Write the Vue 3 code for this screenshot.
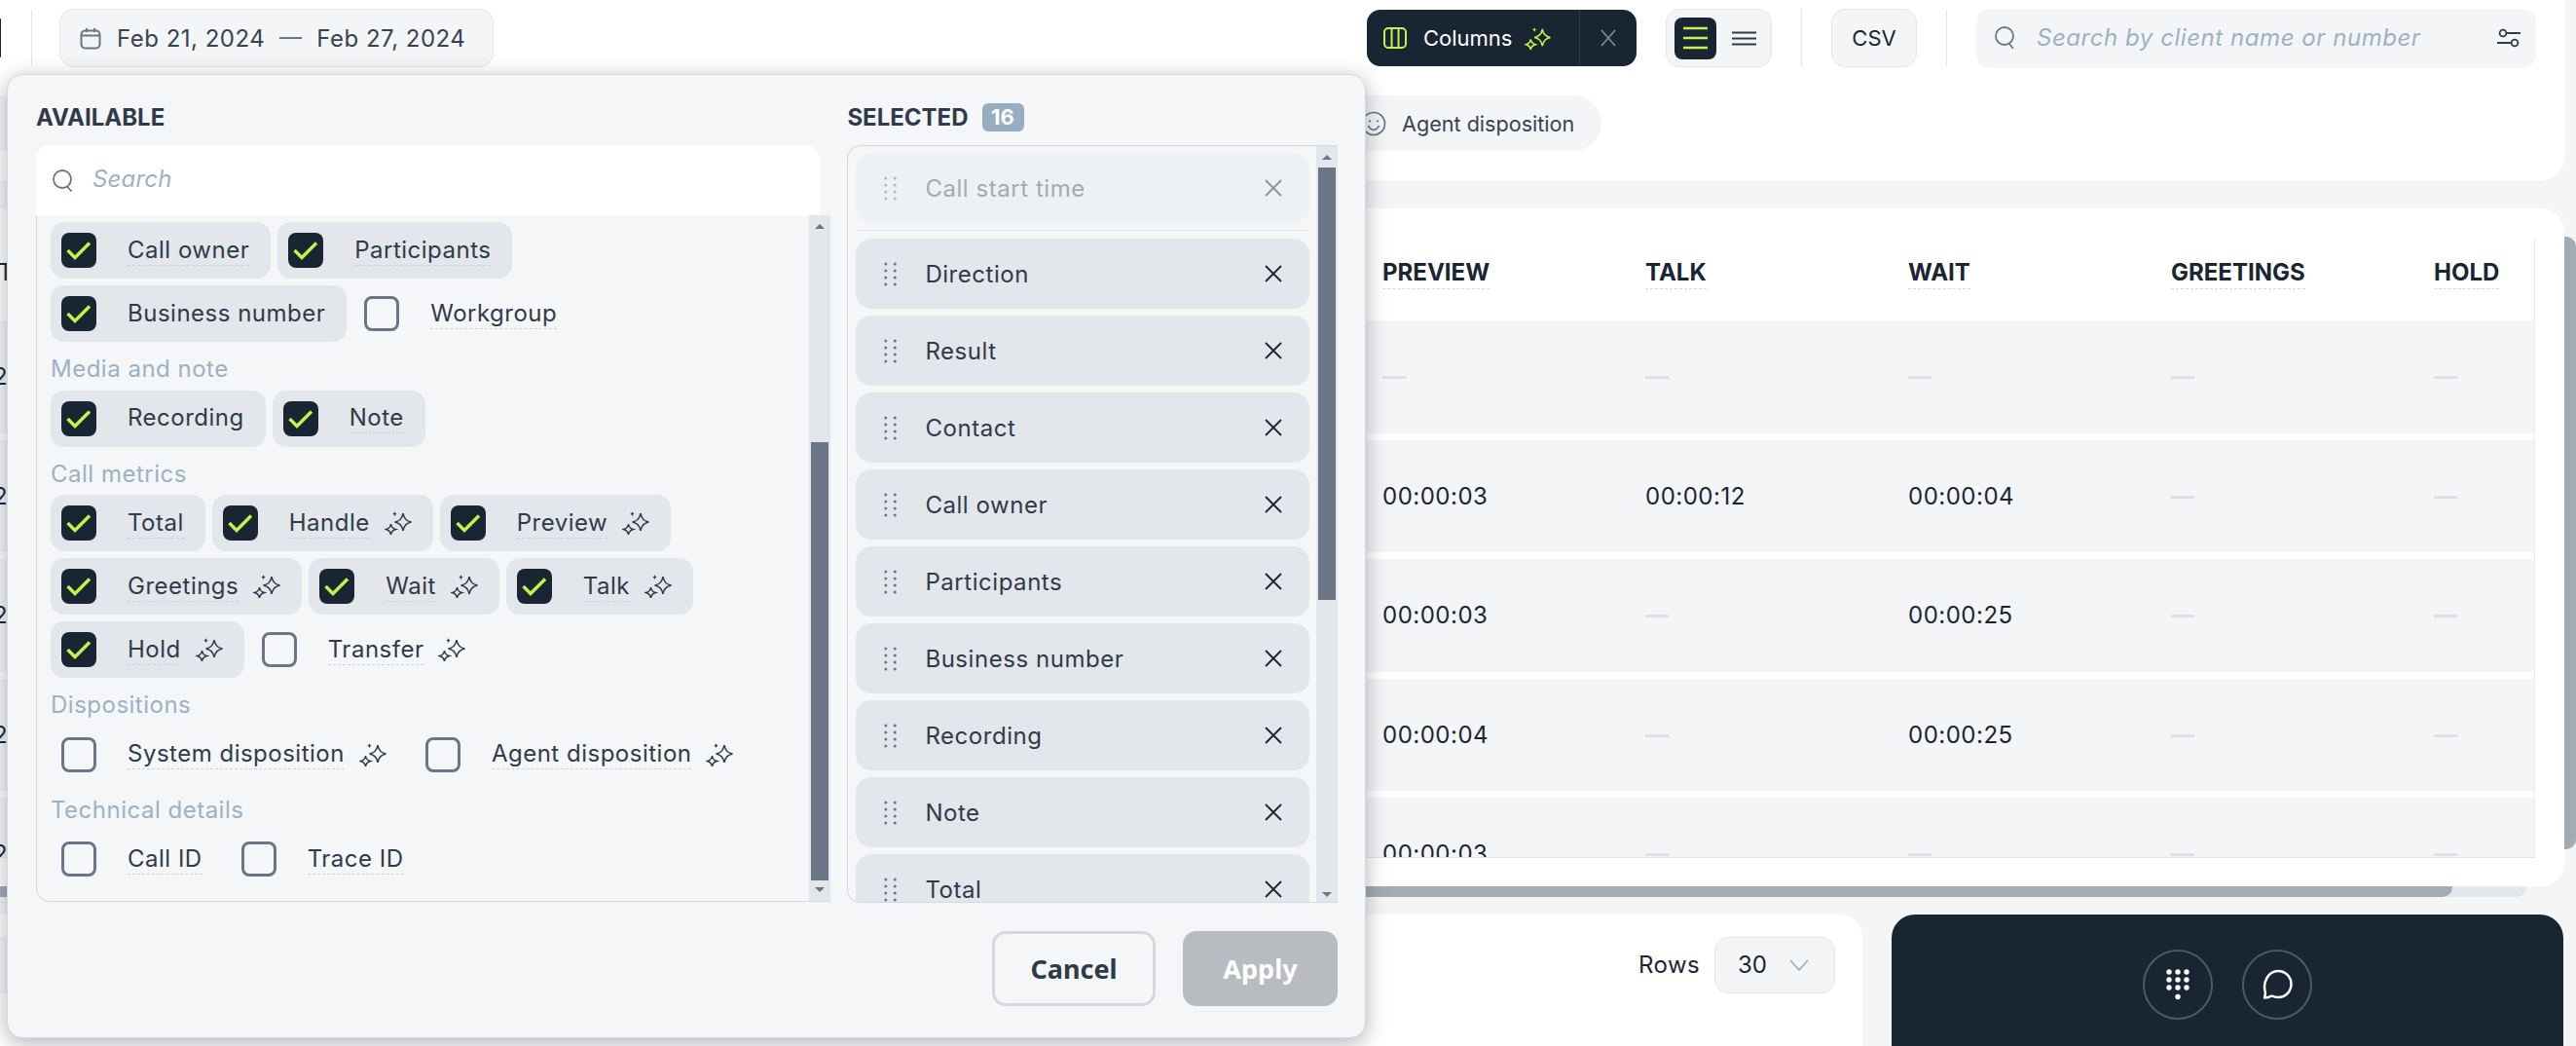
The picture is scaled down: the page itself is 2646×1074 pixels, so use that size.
<template>
  <div class="page">
    <section class="top-panel">
      <div class="toolbar">
        <span class="left-stub"></span>
        <span class="vline first"></span>
        <div class="date-box">
          <svg class="cal" width="22" height="23" viewBox="0 0 22 23" fill="none" stroke="#6b7585" stroke-width="2">
            <rect x="1.5" y="3.5" width="19" height="18" rx="4" />
            <path d="M1.5 8.5h19M7 1v4M15 1v4" />
          </svg>
          <span>Feb 21, 2024</span>
          <span class="date-dash"></span>
          <span>Feb 27, 2024</span>
        </div>
        <div class="tools">
          <div class="columns-btn">
            <div class="columns-main">
              <svg width="24" height="22" viewBox="0 0 24 22" fill="none" stroke="#c8f04a" stroke-width="2">
                <rect x="1" y="1" width="22" height="20" rx="4" />
                <path d="M8.5 1v20M15.5 1v20" />
              </svg>
              <span>Columns</span>
              <svg class="sparkle" width="27" height="25" viewBox="0 0 28 26" fill="none" stroke="#c8f04a" stroke-width="1.6">
                <path :d="sparkleBig" />
                <path :d="sparkleSmall" />
                <path :d="sparkleTiny" fill="#c8f04a" stroke="none" />
              </svg>
            </div>
            <div class="columns-close">
              <svg width="18" height="18" viewBox="0 0 18 18" stroke="#7f8896" stroke-width="1.8"><path d="M2 1l14 16M16 1L2 17" /></svg>
            </div>
          </div>
          <div class="view-toggle">
            <div class="view-on">
              <svg width="25" height="24" viewBox="0 0 25 24" stroke="#c8f04a" stroke-width="2.4"><path d="M0 2h25M0 12h25M0 22h25" /></svg>
            </div>
            <svg class="view-off" width="25" height="15" viewBox="0 0 25 15" stroke="#2f3a4a" stroke-width="2"><path d="M0 1.5h25M0 7.5h25M0 13.5h25" /></svg>
          </div>
          <span class="vline"></span>
          <div class="csv">CSV</div>
          <span class="vline"></span>
          <div class="client-search">
            <svg width="22" height="24" viewBox="0 0 22 24" fill="none" stroke="#6b7585" stroke-width="1.8">
              <circle cx="10" cy="10" r="9" /><path d="M15 18l4 5" />
            </svg>
            <span class="placeholder">Search by client name or number</span>
            <svg class="sliders" width="24" height="20" viewBox="0 0 24 20" fill="none" stroke="#2f3a4a" stroke-width="1.8">
              <circle cx="6" cy="5" r="3.4" /><path d="M10 5h14M0 15h14" /><circle cx="18" cy="15" r="3.4" />
            </svg>
          </div>
        </div>
      </div>
      <div class="filter-row">
        <span class="pill-stub"></span>
        <div class="pill">
          <svg width="26" height="26" viewBox="0 0 26 26" fill="none" stroke="#6b7585" stroke-width="1.7">
            <circle cx="13" cy="13" r="11.5" />
            <path d="M7.5 15c1.3 3 3.3 4.3 5.5 4.3s4.200-1.300 5.500-4.300" />
            <path d="M9 9.500v1.800M17 9.500v1.800" stroke-width="2" />
          </svg>
          <span>Agent disposition</span>
        </div>
      </div>
    </section>

    <section class="table-card">
      <div class="table">
        <div class="head">
          <span class="first-cell"><span class="clip-char head-char">T</span></span>
          <span v-for="h in headers" :key="h" class="head-cell"><span class="dotted">{{ h }}</span></span>
        </div>
        <div v-for="(row, i) in rows" :key="i" class="row">
          <span class="first-cell"><span class="clip-char">2</span></span>
          <span v-for="(c, j) in row" :key="j" class="cell" :class="{ empty: c === '—' }">{{ c }}</span>
        </div>
      </div>
    </section>
    <div class="vscroll"></div>
    <div class="hscroll"><div class="hthumb"></div></div>

    <section class="bottom">
      <div class="pager">
        <span class="pager-stub"></span>
        <span class="rows-label">Rows</span>
        <div class="rows-select">
          <span>30</span>
          <svg width="20" height="12" viewBox="0 0 20 12" fill="none" stroke="#9cb2c4" stroke-width="1.800"><path d="M1 1l9 10 9-10" /></svg>
        </div>
      </div>
      <div class="phone">
        <div class="round-btn">
          <svg width="26" height="32" viewBox="0 0 26 32" fill="#fff">
            <template v-for="y in [3, 11, 19]" :key="y">
              <circle v-for="x in [4, 13, 22]" :key="x" :cx="x" :cy="y" r="2.700" />
            </template>
            <circle cx="13" cy="28.500" r="2.700" />
          </svg>
        </div>
        <div class="round-btn">
          <svg width="32" height="32" viewBox="0 0 32 32" fill="none" stroke="#fff" stroke-width="2.500" stroke-linejoin="round">
            <path d="M3 29.500c1-3 1.200-5 .5-7.500C1.500 14 6.500 2 17 2c7.500 0 13.500 6 13.500 13.500S24.500 29 17 29c-2.500 0-4.500-.5-6.500-1.500-2.500 1.500-5 2-7.500 2z" />
          </svg>
        </div>
      </div>
    </section>

    <div class="modal">
      <div class="modal-cols">
        <div class="col-left">
          <div class="col-title">AVAILABLE</div>
          <div class="search-box">
            <svg width="22" height="23" viewBox="0 0 22 23" fill="none" stroke="#6b7585" stroke-width="1.800">
              <circle cx="10" cy="10" r="9" /><path d="M15 17.500l4.500 5" />
            </svg>
            <span class="placeholder small">Search</span>
          </div>
          <div class="avail-box">
            <div class="avail-list">
              <template v-for="(group, g) in groups" :key="g">
                <div v-if="group.title" class="group-title">{{ group.title }}</div>
                <div class="chips">
                  <label v-for="item in group.items" :key="item.name" class="chip" :class="{ on: item.on }">
                    <span class="check" :class="{ on: item.on }">
                      <svg v-if="item.on" width="36" height="36" viewBox="0 0 36 36" fill="none" stroke="#c8f04a" stroke-width="3.400">
                        <path d="M6.500 18l7.500 7.500L29 10.500" />
                      </svg>
                    </span>
                    <span class="chip-label" :class="{ plain: item.plain }">{{ item.name }}</span>
                    <svg v-if="item.ai" class="chip-spark" width="28" height="26" viewBox="0 0 28 26" fill="none" stroke="#2f3a4a" stroke-width="1.500">
                      <path :d="sparkleBig" />
                      <path :d="sparkleSmall" />
                      <path :d="sparkleTiny" fill="#2f3a4a" stroke="none" />
                    </svg>
                  </label>
                </div>
              </template>
            </div>
            <div class="scrollbar">
              <span class="arrow up"></span>
              <span class="thumb avail-thumb"></span>
              <span class="arrow down"></span>
            </div>
          </div>
        </div>

        <div class="col-right">
          <div class="col-title">SELECTED <span class="badge">16</span></div>
          <div class="sel-box">
            <div class="sel-list">
              <template v-for="(name, i) in selected" :key="name">
                <div class="sel-item" :class="{ locked: i === 0 }">
                  <svg class="grip" width="13" height="25" viewBox="0 0 13 25" fill="#6b7585">
                    <template v-for="y in [2, 9, 16, 23]" :key="y">
                      <circle cx="1.800" :cy="y" r="1.500" /><circle cx="11.200" :cy="y" r="1.500" />
                    </template>
                  </svg>
                  <span class="sel-name">{{ name }}</span>
                  <svg width="18" height="18" viewBox="0 0 18 18" stroke="#1a2534" stroke-width="1.800"><path d="M1 1l16 16M17 1L1 17" /></svg>
                </div>
                <div v-if="i === 0" class="sel-divider"></div>
              </template>
            </div>
            <div class="scrollbar">
              <span class="arrow up sel-up"></span>
              <span class="thumb sel-thumb"></span>
              <span class="arrow down"></span>
            </div>
          </div>
        </div>
      </div>
      <div class="modal-foot">
        <button class="btn cancel">Cancel</button>
        <button class="btn apply">Apply</button>
      </div>
    </div>
  </div>
</template>

<script setup>
const sparkleBig = 'M19 3c.8 5 3 8 8.500 9-5.500 1-7.700 4-8.500 9-.8-5-3-8-8.500-9 5.500-1 7.700-4 8.500-9z'
const sparkleSmall = 'M6.500 14c.4 3 1.600 4.600 5 5.500-3.400.9-4.600 2.500-5 5.500-.4-3-1.600-4.600-5-5.500 3.400-.9 4.600-2.500 5-5.500z'
const sparkleTiny = 'M10.500 1c.3 1.700.9 2.400 2.500 2.700-1.600.3-2.200 1-2.500 2.700-.3-1.700-.9-2.400-2.500-2.700 1.600-.3 2.200-1 2.500-2.700z'

const headers = ['PREVIEW', 'TALK', 'WAIT', 'GREETINGS', 'HOLD']
const rows = [
  ['—', '—', '—', '—', '—'],
  ['00:00:03', '00:00:12', '00:00:04', '—', '—'],
  ['00:00:03', '—', '00:00:25', '—', '—'],
  ['00:00:04', '—', '00:00:25', '—', '—'],
  ['00:00:03', '—', '—', '—', '—']
]

const groups = [
  {
    items: [
      { name: 'Call owner', on: true },
      { name: 'Participants', on: true },
      { name: 'Business number', on: true, plain: true },
      { name: 'Workgroup' }
    ]
  },
  {
    title: 'Media and note',
    items: [
      { name: 'Recording', on: true, plain: true },
      { name: 'Note', on: true }
    ]
  },
  {
    title: 'Call metrics',
    items: [
      { name: 'Total', on: true },
      { name: 'Handle', on: true, ai: true },
      { name: 'Preview', on: true, ai: true },
      { name: 'Greetings', on: true, ai: true },
      { name: 'Wait', on: true, ai: true },
      { name: 'Talk', on: true, ai: true },
      { name: 'Hold', on: true, ai: true },
      { name: 'Transfer', ai: true }
    ]
  },
  {
    title: 'Dispositions',
    items: [
      { name: 'System disposition', ai: true },
      { name: 'Agent disposition', ai: true }
    ]
  },
  {
    title: 'Technical details',
    items: [{ name: 'Call ID' }, { name: 'Trace ID' }]
  }
]

const selected = ['Call start time', 'Direction', 'Result', 'Contact', 'Call owner', 'Participants', 'Business number', 'Recording', 'Note', 'Total']
</script>

<style>
html, body { margin: 0; background: #f4f5f7; }
</style>

<style scoped>
.page {
  position: relative;
  width: 2646px;
  height: 1074px;
  overflow: hidden;
  background: #f4f5f7;
  font-family: Inter, "Noto Sans", sans-serif;
  font-size: 24px;
  color: #1a2534;
}

/* top panel */
.top-panel {
  width: 2634px;
  height: 185px;
  background: #fff;
  border-radius: 0 0 24px 0;
}
.toolbar {
  display: flex;
  align-items: center;
  height: 60px;
  padding: 9px 29px 0 0;
}
.left-stub { width: 1px; height: 40px; background: #1a2534; border-radius: 0 4px 4px 0; }
.vline { width: 1px; height: 58px; background: #e3e7eb; flex: none; }
.vline.first { margin-left: 31px; margin-right: 28px; }
.date-box {
  box-sizing: border-box;
  display: flex;
  align-items: center;
  width: 446px;
  height: 60px;
  padding-left: 20px;
  background: #f4f5f7;
  border: 1px solid #e3e7eb;
  border-radius: 14px;
  color: #384250;
  letter-spacing: 0.5px;
}
.cal { margin-right: 16px; }
.date-dash { width: 23px; height: 2px; background: #6b7585; margin: 0 15px; }
.tools { display: flex; align-items: center; gap: 30px; margin-left: auto; }
.columns-btn {
  display: flex;
  height: 58px;
  width: 277px;
  background: #1a2534;
  border-radius: 14px;
  color: #fff;
  font-size: 22px;
}
.columns-main {
  display: flex;
  align-items: center;
  width: 219px;
  padding-left: 17px;
  box-sizing: border-box;
  border-right: 1px solid #2f3a4a;
}
.columns-main span { margin-left: 17px; }
.columns-main .sparkle { margin-left: 13px; }
.columns-close { flex: 1; display: flex; align-items: center; justify-content: center; }
.view-toggle {
  box-sizing: border-box;
  display: flex;
  align-items: center;
  width: 109px;
  height: 60px;
  padding-left: 8px;
  background: #f4f5f7;
  border: 1px solid #e3e7eb;
  border-radius: 14px;
}
.view-on {
  display: flex;
  align-items: center;
  justify-content: center;
  width: 43px;
  height: 43px;
  background: #1a2534;
  border-radius: 8px;
}
.view-off { margin-left: 16px; }
.csv {
  box-sizing: border-box;
  display: flex;
  align-items: center;
  justify-content: center;
  width: 88px;
  height: 60px;
  background: #f4f5f7;
  border: 1px solid #e3e7eb;
  border-radius: 14px;
  font-size: 22px;
}
.client-search {
  box-sizing: border-box;
  display: flex;
  align-items: center;
  width: 575px;
  height: 61px;
  padding: 0 16px 0 19px;
  background: #f4f5f7;
  border-radius: 14px;
}
.placeholder {
  font-style: italic;
  color: #9cb2c4;
  margin: 0 0 2px 21px;
  letter-spacing: 0.55px;
}
.placeholder.small { margin: 0 0 4px 19px; letter-spacing: 0.2px; }
.sliders { margin-left: auto; }
.filter-row { display: flex; margin-top: 29px; }
.pill-stub { width: 7px; height: 57px; background: #f4f5f7; }
.pill {
  display: flex;
  align-items: center;
  gap: 16px;
  height: 57px;
  margin-left: 1391px;
  padding: 0 28px 0 0;
  background: #f4f5f7;
  border-radius: 0 29px 29px 0;
  font-size: 21.6px;
  color: #384250;
}

/* table */
.table-card {
  position: relative;
  box-sizing: border-box;
  width: 2634px;
  height: 696px;
  margin-top: 29px;
  padding: 31px 30px 29px 0;
  background: #fff;
  border-radius: 0 24px 24px 0;
}
.table {
  height: 636px;
  overflow: hidden;
  border-right: 1px solid #e9ecef;
  border-bottom: 1px solid #e3e7eb;
  box-sizing: border-box;
}
.head, .row {
  display: grid;
  grid-template-columns: 1420px repeat(5, 270px);
}
.head { height: 84px; align-items: start; padding-top: 20px; box-sizing: border-box; }
.head-cell { font-weight: 700; line-height: 30px; }
.dotted { display: inline-block; border-bottom: 1px dashed #d5d8dd; padding-bottom: 1px; }
.row {
  height: 115.5px;
  margin-bottom: 7px;
  align-items: center;
  background: #f4f5f7;
}
.cell { letter-spacing: 0.5px; }
.cell.empty { color: #dcdfe3; font-weight: 700; letter-spacing: 0; }
.first-cell { overflow: hidden; }
.clip-char { display: block; margin-left: -7px; }
.clip-char.head-char { margin-left: -2px; line-height: 30px; }
.vscroll {
  position: absolute;
  top: 243px;
  right: 0;
  width: 12px;
  height: 629px;
  background: #a3abb3;
  border-radius: 0 10px 10px 0;
}
.hscroll {
  width: 2595px;
  height: 11px;
  background: #e3e7eb;
  border-radius: 0 0 10px 0;
}
.hthumb { width: 2519px; height: 11px; background: #a3abb3; border-radius: 0 0 10px 0; }

/* bottom */
.bottom { display: flex; gap: 30px; width: 2633px; height: 135px; margin-top: 18px; }
.pager {
  flex: none;
  box-sizing: border-box;
  display: flex;
  align-items: center;
  width: 1913px;
  height: 135px;
  padding: 0 28px 32px 0;
  background: #fff;
  border-radius: 0 24px 0 0;
}
.pager-stub { width: 8px; height: 58px; background: #f4f5f7; margin-right: auto; }
.rows-label { margin-right: 15px; letter-spacing: 0.4px; }
.rows-select {
  box-sizing: border-box;
  display: flex;
  align-items: center;
  gap: 23px;
  width: 124px;
  height: 58px;
  padding-left: 23px;
  background: #f4f5f7;
  border: 1px solid #e3e7eb;
  border-radius: 14px;
}
.phone {
  flex: 1;
  display: flex;
  justify-content: center;
  gap: 30px;
  padding-top: 36px;
  box-sizing: border-box;
  background: #1a2534;
  border-radius: 24px 24px 0 0;
}
.round-btn {
  box-sizing: border-box;
  display: flex;
  align-items: center;
  justify-content: center;
  width: 72px;
  height: 72px;
  border: 2px solid #4d5765;
  border-radius: 50%;
}

/* columns popover */
.modal {
  position: absolute;
  left: 7px;
  top: 76px;
  box-sizing: border-box;
  width: 1396px;
  height: 990px;
  padding: 29px 28px 0 29px;
  background: #f5f6f8;
  border: 1px solid #d5d8dd;
  border-radius: 16px;
  box-shadow: 0 5px 22px rgba(26, 37, 52, 0.35);
  color: #2f3a4a;
}
.modal-cols { display: flex; gap: 17px; }
.col-left { width: 817px; }
.col-right { width: 504px; }
.col-title {
  display: flex;
  align-items: flex-start;
  gap: 14px;
  height: 43px;
  line-height: 29px;
  font-weight: 700;
  color: #2f3a4a;
}
.badge {
  box-sizing: border-box;
  width: 43px;
  height: 29px;
  text-align: center;
  background: #98adc0;
  border-radius: 6px;
  color: #fff;
  font-size: 22px;
}
.search-box {
  box-sizing: border-box;
  display: flex;
  align-items: center;
  width: 805px;
  height: 72px;
  padding-left: 17px;
  background: #fff;
  border-radius: 14px 14px 0 0;
}
.avail-box {
  display: flex;
  height: 705px;
  overflow: hidden;
  box-sizing: border-box;
  border-left: 1px solid #d5d8dd;
  border-bottom: 1px solid #d5d8dd;
  border-bottom-left-radius: 14px;
}
.avail-list { flex: 1; padding: 7px 0 0 14px; letter-spacing: 0.5px; }
.group-title {
  box-sizing: border-box;
  height: 49.500px;
  padding-top: 13px;
  line-height: 30px;
  color: #9cb2c4;
}
.chips { display: flex; flex-wrap: wrap; gap: 7px; }
.chip {
  box-sizing: border-box;
  display: flex;
  align-items: center;
  height: 58px;
  padding: 0 22px 0 11px;
  border-radius: 14px;
}
.chip.on { background: #e3e7eb; }
.check {
  box-sizing: border-box;
  flex: none;
  width: 36px;
  height: 36px;
  margin-right: 32px;
  border: 3px solid #6b7585;
  border-radius: 8px;
}
.check.on { border: none; background: #1a2534; }
.check svg { display: block; }
.chip-label { line-height: 30px; border-bottom: 1px dashed #cdd3da; }
.chip-label.plain { border-bottom-color: transparent; }
.chip-spark { margin-left: 15px; }
.scrollbar {
  box-sizing: border-box;
  flex: none;
  display: flex;
  flex-direction: column;
  align-items: center;
  width: 22px;
  background: #e3e7eb;
}
.arrow { width: 0; height: 0; border-left: 5px solid transparent; border-right: 5px solid transparent; }
.arrow.up { border-bottom: 5px solid #6b7585; margin-top: 9px; }
.arrow.down { border-top: 5px solid #6b7585; margin-top: 7px; }
.thumb { width: 18px; background: #6b7585; }
.avail-thumb { height: 450px; margin-top: 219px; }
.sel-box {
  box-sizing: border-box;
  display: flex;
  height: 778px;
  overflow: hidden;
  border: 1px solid #d5d8dd;
  border-right: none;
  border-radius: 14px 0 0 14px;
}
.sel-list { flex: 1; padding: 7px 7px 0 8px; min-width: 0; letter-spacing: 0.55px; }
.sel-item {
  box-sizing: border-box;
  display: flex;
  align-items: center;
  height: 72px;
  margin-bottom: 7px;
  padding: 0 28px 0 29px;
  background: #e3e7eb;
  border-radius: 16px;
}
.sel-item.locked { background: #eef1f4; margin-bottom: 7px; }
.sel-item.locked .sel-name { color: #a4a9b0; }
.sel-item.locked svg { opacity: 0.45; }
.sel-name { flex: 1; margin-left: 29px; color: #2f3a4a; }
.sel-divider { height: 1px; background: #e3e7eb; margin-bottom: 8px; }
.sel-up { margin-bottom: 8px; }
.sel-thumb { height: 444px; }
.col-right .scrollbar .arrow.down { margin-top: 300px; }
.modal-foot { display: flex; justify-content: flex-end; gap: 28px; margin-top: 29px; }
.btn {
  height: 77px;
  border-radius: 14px;
  font-family: "Noto Sans", sans-serif;
  font-size: 27px;
  font-weight: 700;
}
.cancel { width: 168px; background: transparent; border: 3px solid #d5d8dd; color: #2f3a4a; }
.apply { width: 159px; background: #b8bbc0; border: none; color: #fff; }
</style>
